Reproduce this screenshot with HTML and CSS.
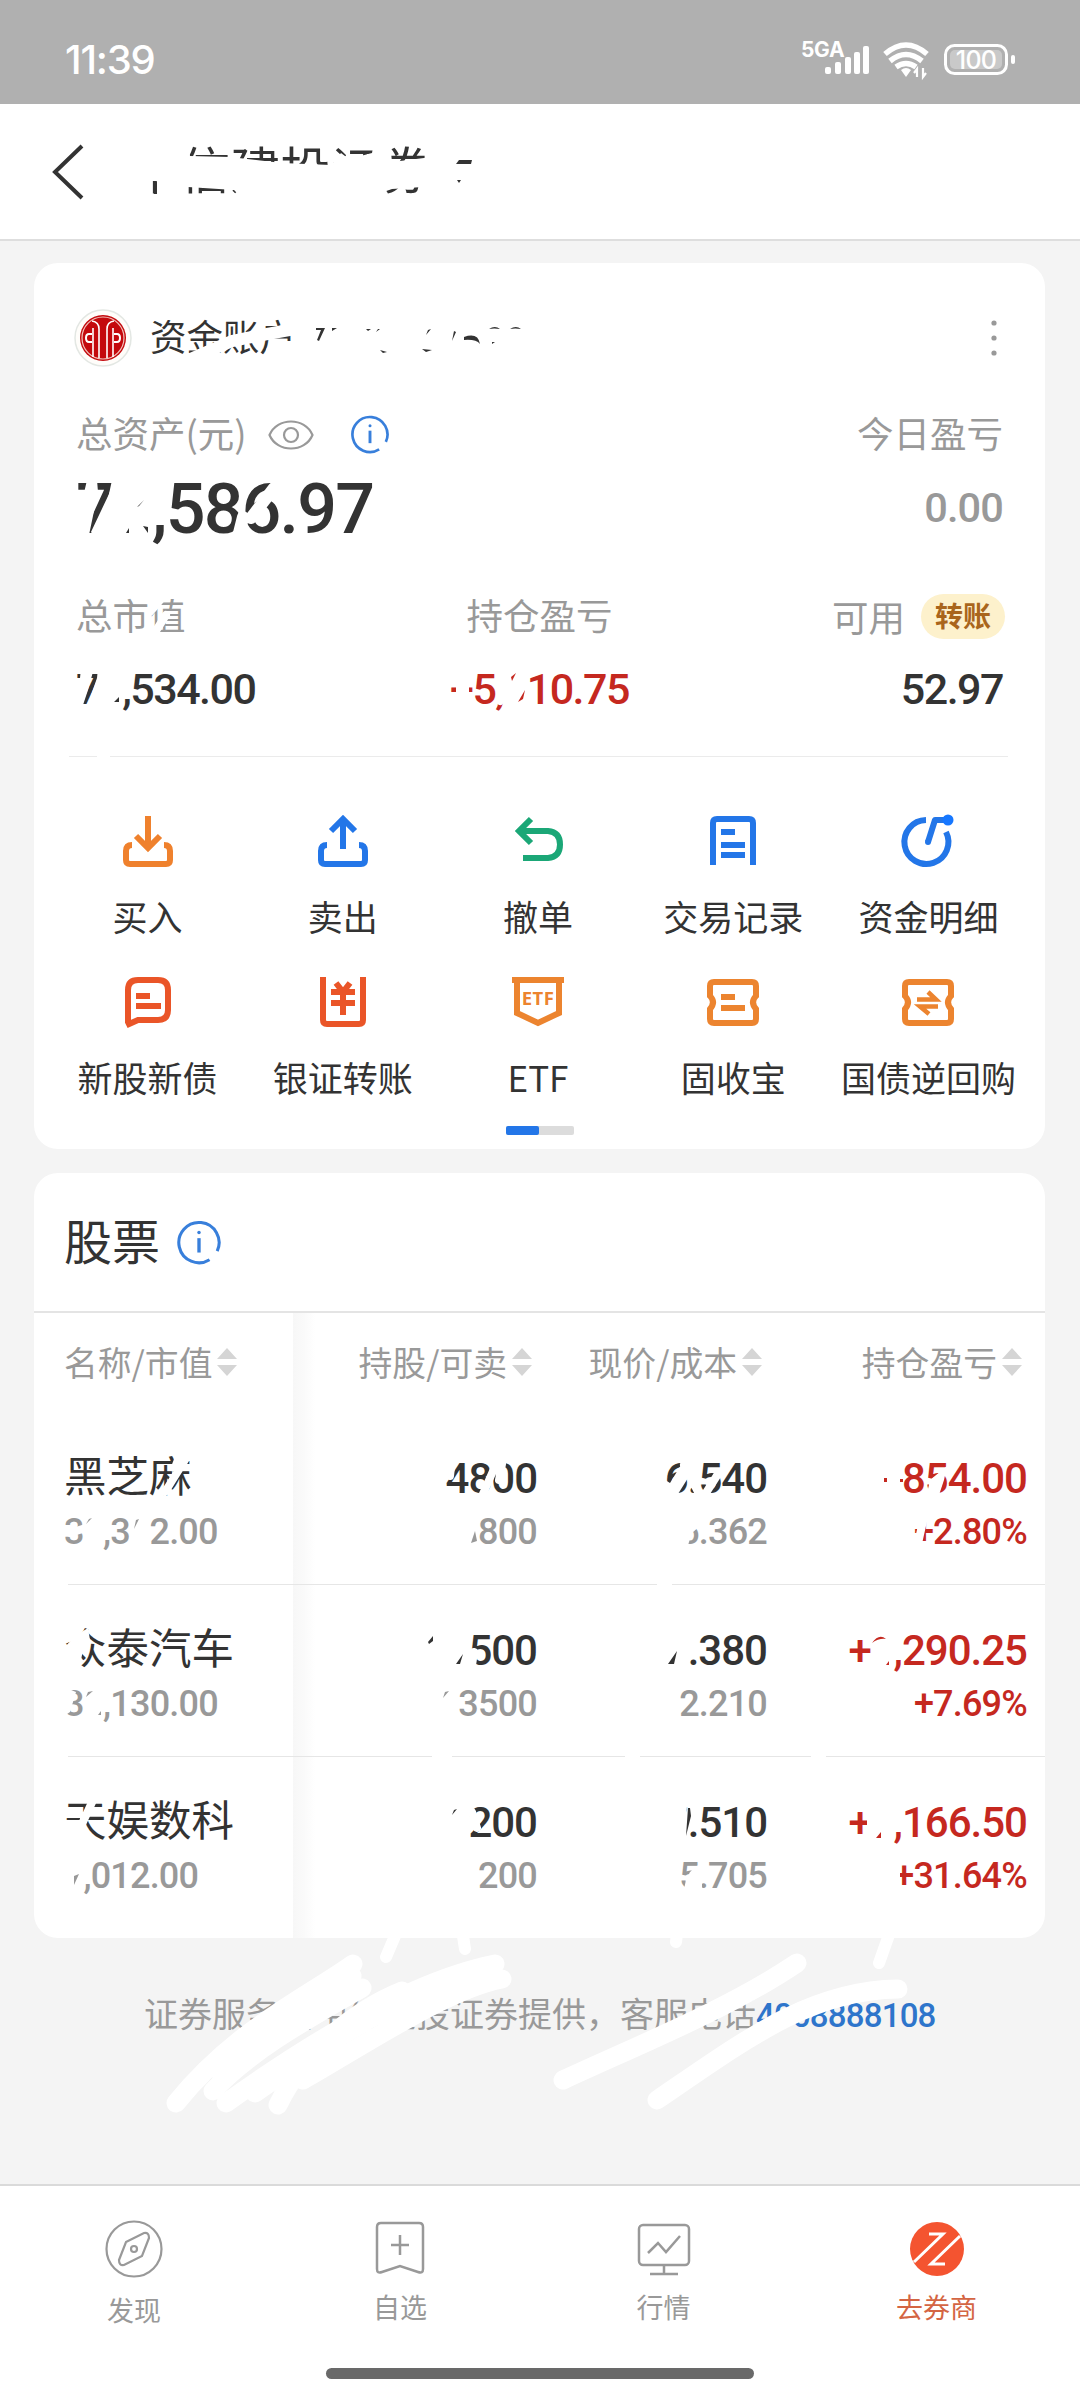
FILE: index.html
```html
<!DOCTYPE html>
<html lang="zh-CN">
<head>
<meta charset="utf-8">
<title>证券账户</title>
<link rel="stylesheet" href="styles.css">
</head>
<body>
<div class="screen">
  <header class="status">
    <span class="time">11:39</span>
    <svg class="status-icons" width="220" height="44" viewBox="798 38 220 44" fill="#fff">
      <text x="801" y="57" class="net">5GA</text>
      <rect x="825" y="67" width="6" height="7" rx="2"/><rect x="835" y="62" width="6" height="12" rx="2"/><rect x="845" y="57" width="6" height="17" rx="2"/><rect x="854" y="52" width="6" height="22" rx="2"/><rect x="863" y="46" width="6" height="28" rx="2"/>
      <g fill="none" stroke="#fff" stroke-width="5.500"><path d="M885 54Q906 36 927 54"/><path d="M890 61Q906 48 922 61"/><path d="M896 67Q906 60 916 67"/></g>
      <path d="M901 70Q906 66 911 70L906 77Z"/><path d="M917 77v-8l-3 4M923 68v9l3-4" stroke="#fff" stroke-width="2.200" fill="none"/>
      <rect x="945.500" y="45.500" width="61" height="28" rx="9" fill="none" stroke="#fff" stroke-width="3"/>
      <rect x="950" y="50" width="52" height="19" rx="5" fill="#c9c9c9"/><rect x="1011" y="55" width="4" height="9" rx="2"/>
      <text x="976" y="69" text-anchor="middle" class="battery">100</text>
    </svg>
  </header>
  <nav class="topbar">
    <svg width="34" height="58" viewBox="51 142 34 58"><path d="M82 145 55 171 82 197" fill="none" stroke="#333" stroke-width="4"/></svg>
    <h1>中信建投证券</h1>
  </nav>

  <main>
    <section class="card account">
      <div class="acct-head">
        <svg width="58" height="58" viewBox="-29 -29 58 58"><circle r="28" fill="#fffdfa" stroke="#e3e7e3" stroke-width="1.500"/><circle r="23" fill="#c4090d"/><circle r="21" fill="none" stroke="#f1c5bd" stroke-width="1.200"/><g fill="none" stroke="#fff" stroke-width="1.600"><path d="M-10-10v29M10-10v29M-11-17q7 1 7 8v29M11-17q-7 1-7 8v29"/><path d="M-11-4h-3q-3 0-3 4t3 4h3M11-4h3q3 0 3 4t-3 4h-3" stroke-width="2"/></g></svg>
        <span class="acct-name">资金账户</span>
        <svg class="more" width="10" height="40" viewBox="0 0 10 40" fill="#999"><circle cx="5" cy="5" r="2.600"/><circle cx="5" cy="20" r="2.600"/><circle cx="5" cy="35" r="2.600"/></svg>
      </div>
      <div class="line labels">
        <span>总资产(元)</span>
        <svg class="eye" width="46" height="32" viewBox="-23 -16 46 32" fill="none" stroke="#999" stroke-width="2.200"><path d="M-21.500 0C-14-18 14-18 21.500 0 14 18-14 18-21.500 0Z"/><circle r="7"/></svg>
        <svg class="info" width="40" height="40" viewBox="-24 -24 48 48"><use href="#info"/></svg>
        <span class="right">今日盈亏</span>
      </div>
      <div class="line totals"><span class="big num">7<i></i>,586.97</span><span class="right num today">0.00</span></div>
      <div class="three labels row-a"><span>总市值</span><span>持仓盈亏</span><span class="avail">可用<b>转账</b></span></div>
      <div class="three num row-b"><span>7<i></i>,534.00</span><span class="red">+5,<i></i>10.75</span><span>52.97</span></div>
      <hr>
      <div class="actions">
        <div><svg viewBox="-26 -26 52 52" fill="none" stroke="#ef812d" stroke-width="6"><path d="M0-25V6M-12-5 0 7 12-5M-16 4q-6 0-6 6v9q0 4 4 4h36q4 0 4-4v-9q0-6-6-6"/></svg><span>买入</span></div>
        <div><svg viewBox="-26 -26 52 52" fill="none" stroke="#2376e8" stroke-width="6"><path d="M0 8V-22M-12-10 0-22 12-10M-16 4q-6 0-6 6v9q0 4 4 4h36q4 0 4-4v-9q0-6-6-6"/></svg><span>卖出</span></div>
        <div><svg viewBox="-26 -26 52 52" fill="none" stroke="#1ba777" stroke-width="6"><path d="M-7-22-19-10-7 2M-19-10H10Q22-9 22 3.500T10 17H-15"/></svg><span>撤单</span></div>
        <div><svg viewBox="-26 -26 52 52" fill="none" stroke="#2376e8" stroke-width="6"><path d="M-20 24V-18q0-4 4-4h32q4 0 4 4V24M-12-9H2M-12 4h24M-12 14h24"/></svg><span>交易记录</span></div>
        <div><svg viewBox="-26 -26 52 52" fill="none" stroke="#2376e8" stroke-width="6"><path d="M-2-21A22 22 0 1 0 18-9M0 1 7-21H20" stroke-linejoin="round"/><circle cx="20" cy="-21" r="5.500" fill="#1677ff" stroke="none"/><circle cx="0" cy="1" r="3" fill="#2376e8" stroke="none"/></svg><span>资金明细</span></div>
        <div><svg viewBox="-26 -26 52 52" fill="none" stroke="#ea5528" stroke-width="6"><path d="M-20 20V-12q0-10 10-10H10q10 0 10 10V8q0 10-10 10H-10L-19 22ZM-12-6H2M-12 4h25"/></svg><span>新股新债</span></div>
        <div><svg viewBox="-26 -26 52 52" fill="none" stroke="#ea5528" stroke-width="6"><path d="M-20-25V18q0 4 4 4h32q4 0 4-4V-25M-7-19 0-10 7-19M-12-10h24M-12 1h24M0-10V13"/></svg><span>银证转账</span></div>
        <div><svg viewBox="-26 -26 52 52" fill="none" stroke="#ec842f" stroke-width="6"><path d="M-26-22h52M-21-22V11L0 21 21 11V-22"/><text x="0" y="3" text-anchor="middle" class="etf">ETF</text></svg><span>ETF</span></div>
        <div><svg viewBox="-26 -26 52 52" fill="none" stroke="#ec842f" stroke-width="6"><path id="ticket" d="M-19-20H19q4 0 4 4v10q-6 6 0 13v10q0 4-4 4h-38q-4 0-4-4V7q6-7 0-13v-10q0-4 4-4Z"/><path d="M-12-5H2M-12 6h24"/></svg><span>固收宝</span></div>
        <div><svg viewBox="-26 -26 52 52" fill="none" stroke="#ec842f" stroke-width="6"><use href="#ticket"/><path d="M-11-2.500H8L0-10M10 4.500H-8L1 12" stroke-width="4.500"/></svg><span>国债逆回购</span></div>
      </div>
      <div class="pager"><span></span></div>
    </section>

    <section class="card holdings">
      <div class="sec-title"><h2>股票</h2><svg class="info" width="46" height="46" viewBox="-24 -24 48 48"><g id="info" fill="none" stroke="#387fdb" stroke-width="3.200"><path d="M19 9.500A21 21 0 1 0 11 18.500"/><path d="M0-4V11" stroke-width="3.500"/><circle cy="-10" r="1.800" fill="#387fdb" stroke="none"/></g></svg></div>
      <div class="table">
        <div class="tr th">
          <span>名称/市值<svg viewBox="0 0 20 28"><path d="M0 11 10 0 20 11ZM0 17H20L10 28Z"/></svg></span>
          <span>持股/可卖<svg viewBox="0 0 20 28"><path d="M0 11 10 0 20 11ZM0 17H20L10 28Z"/></svg></span>
          <span>现价/成本<svg viewBox="0 0 20 28"><path d="M0 11 10 0 20 11ZM0 17H20L10 28Z"/></svg></span>
          <span>持仓盈亏<svg viewBox="0 0 20 28"><path d="M0 11 10 0 20 11ZM0 17H20L10 28Z"/></svg></span>
        </div>
        <div class="tr num">
          <div><strong class="name">黑芝麻</strong><small>3<i></i>,3<i></i>2.00</small></div>
          <div><strong>4800</strong><small>800</small></div>
          <div><strong>6.540</strong><small>5.362</small></div>
          <div class="red"><strong>854.00</strong><small>+2.80%</small></div>
        </div>
        <div class="tr num">
          <div><strong class="name">众泰汽车</strong><small>3<i></i>,130.00</small></div>
          <div><strong>500</strong><small>3500</small></div>
          <div><strong>.380</strong><small>2.210</small></div>
          <div class="red"><strong>+<i></i>,290.25</strong><small>+7.69%</small></div>
        </div>
        <div class="tr num">
          <div><strong class="name">天娱数科</strong><small><i></i>,012.00</small></div>
          <div><strong>200</strong><small>200</small></div>
          <div><strong>7.510</strong><small>5.705</small></div>
          <div class="red"><strong>+<i></i>,166.50</strong><small>+31.64%</small></div>
        </div>
      </div>
    </section>
    <p class="service">证券服务由中信建投证券提供，客服电话<a>4008888108</a></p>
  </main>

  <footer class="tabs">
    <div class="first"><svg viewBox="-30 -30 60 60" fill="none" stroke="#999" stroke-width="2.200"><circle r="27.500"/><path d="M-8-7 10-16q5-1 5 5L8 7-10 16q-5 1-5-5Z"/><circle r="3"/></svg><span>发现</span></div>
    <div><svg viewBox="-30 -30 60 60" fill="none" stroke="#999" stroke-width="2.500"><path d="M-19-26H19q4 0 4 4V20q0 5-5 3L0 17-18 23q-5 2-5-3V-22q0-4 4-4ZM-9-4H9M0-14V6"/></svg><span>自选</span></div>
    <div><svg viewBox="-30 -30 60 60" fill="none" stroke="#999" stroke-width="2.500"><rect x="-25" y="-24" width="50" height="40" rx="4"/><path d="M0 16v9M-14 25h28M-16 4-6-6 2 3 16-13"/></svg><span>行情</span></div>
    <div class="on"><svg viewBox="-30 -30 60 60"><circle r="27" fill="#f45430"/><g fill="none" stroke="#fff" stroke-width="3"><path d="M-8-15H6L-23 13M23-13-6 15H8"/></g></svg><span>去券商</span></div>
  </footer>
  <div class="home"></div>

  <svg class="scribble" width="1080" height="2400" viewBox="0 0 1080 2400">
    <path class="patch" d="M130 140H188L190 156 230 157 282 163 331 165 341 153 349 159 372 153 374 142H390L392 162 432 157 436 140H500V200H426L423 187 392 189 372 196H240L234 190 188 187 184 200H160V181H152V200H130Z"/>
    <path class="patch" d="M87 480H97L98 492 89 535 72 545V493H84ZM112 480 109 494 91 532 100 545 122 540V480ZM81 668H94L88 690 82 708H73V682L80 678ZM98 668 97 678 87 707H104V668ZM670 1483 681 1465 691 1464 688 1478 678 1494 662 1498V1478ZM676 1508H702V1524L692 1533 687 1548H676ZM658 1806H687L684 1850H655ZM690 1872 702 1862V1898H682L686 1880ZM930 1480 947 1466 944 1480 938 1498H926ZM64 1648 75 1636 88 1628 90 1640 83 1650 79 1670H64ZM66 1812H88L80 1845H62V1826H80V1818H66ZM64 1716 70 1712 76 1692 66 1688H60V1716Z"/>
    <g class="w12"><path d="M186 361 232 341 262 335 300 328"/><path d="M272 351H302"/><path d="M106 523 116 492M238 537 243 517M251 518 274 488"/></g>
    <g class="w8">
      <path d="M150 612 162 598M152 637 166 615M460 672V705M465 672V705M500 701 509 685"/>
      <path d="M190 1452 165 1492M176 1465 182 1450M70 1533 98 1524M452 1458 450 1476M482 1496 497 1462M499 1480 502 1464"/>
      <path d="M684 1465 688 1474M704 1496 718 1474M692 1480 700 1496M917 1548 925 1512"/>
      <path d="M471 1672 474 1652M472 1812 477 1828"/>
      <path d="M94 1798 82 1824M871 1815V1846M896 1862V1894"/>
    </g>
    <g class="bits">
      <path d="M154 182h3v12h-3zM456 164l3-4h13l-1 4zM457 180h4l-2 3zM316 328h9l-6 13-2-1 4-10h-5zM332 328h5l-5 3zM366 329h5l-3 2zM376 332l4-3h-2zM380 350l7 2-4 1zM426 335l5-6-3 1zM422 349l10 1-6 2zM443 338l5-8zM454 331l2 1-4 9zM464 337q14-5 16 7-4-5-16-4zM475 351h4zM489 329q6-4 11 0-6-1-11 0zM510 329q6-4 11 0-6-1-11 0zM492 342h3l-3 2z"/>
      <path d="M137 507l7-7-5 6zM126 533l3-5v5zM143 526l5 7v-6zM114 702l5-5v5zM428 1642l5-6v5l-4 3zM456 1664l7-10-3 10zM452 1815l5-6-3 1zM668 1664l9-13-3 13zM686 1836l5-20-1-8h-2z"/>
    </g>
    <path class="graybits" d="M86 1524l6-6-3 1zM134 1529l5-10-3 1zM471 1543l4-12 2 10zM443 1698l6-7-4 1zM86 1697l7-6-5 1zM98 1715l3-4v4zM74 1885v-9l5-2z"/>
    <path class="redbits" d="M884 1478h3v4h-3zM900 1479h3v3h-3zM872 1643q7-10 14-4-7-1-14 4zM886 1665l3-4v4zM876 1838l5-6v6zM511 677l5-4-4 8zM518 702l7-12-2 9z"/>
    <path class="gaps" d="M97 757H110M657 1584.500H672M432 1756.500H452M625 1756.500H640M811 1756.500H826"/>
    <g class="w17"><path d="M353 1964C305 1998 235 2030 176 2103"/><path d="M362 1988C315 2015 250 2050 213 2091"/><path d="M495 1964C405 1982 300 2050 226 2103"/><path d="M502 1979C445 1990 360 2048 303 2080"/><path d="M402 1991C355 2010 305 2050 278 2105"/><path d="M475 1974C410 1990 330 2040 255 2093"/><path d="M352 1976C300 2006 260 2030 220 2072"/><path d="M797 1963C730 2008 650 2040 563 2080"/><path d="M898 1989C810 1990 745 2040 657 2100"/></g>
    <g class="w12"><path d="M395 1936 386 1957M463 1936 465 1949M677 1934 676 1942M890 1932 879 1963"/></g>
  </svg>
</div>
</body>
</html>
```
FILE: styles.css
```css
* { box-sizing: border-box; }
body { margin: 0; background: #f4f4f4; color: #333; font-family: "Noto Sans CJK SC", sans-serif; }
h1, h2, p { margin: 0; font-weight: 400; }
svg { display: block; flex: none; }
.screen { position: relative; width: 1080px; height: 2400px; overflow: hidden; display: flex; flex-direction: column; }

.status { height: 104px; background: #b0b0b0; color: #fff; display: flex; justify-content: space-between; padding: 38px 62px 0 65px; }
.time { font: 500 40px/44px Inter, sans-serif; letter-spacing: -1.2px; }
.net { font: 700 21px Inter, sans-serif; letter-spacing: -.3px; }
.battery { font: 500 25px Inter, sans-serif; letter-spacing: -.8px; }

.topbar { height: 137px; background: #fff; border-bottom: 2px solid #dedede; display: flex; align-items: center; padding: 0 51px 0; }
.topbar h1 { font-size: 50px; line-height: 60px; margin: -9px 0 0 45px; letter-spacing: .2px; }

main { height: 1943px; padding: 22px 35px 0 34px; }
.card { background: #fff; border-radius: 24px; }
.num { font-family: Roboto, sans-serif; font-weight: 500; }
.num i { display: inline-block; width: .54em; }
.red { color: #c5281f; }
.right { margin-left: auto; }

.account { height: 886px; padding: 40px 42px 0; display: flex; flex-direction: column; }
.acct-head { height: 68px; display: flex; align-items: center; margin-left: -2px; padding-top: 2px; }
.acct-name { font-size: 36.5px; line-height: 48px; margin: -5px 0 0 18px; }
.more { margin: 0 4px 0 auto; }
.labels { color: #999; font-size: 36.5px; line-height: 44px; }
.line { display: flex; align-items: center; }
.line.labels { height: 44px; margin-top: 40px; }
.eye { margin: 3px 0 0 21px; }
.line .info { margin: 1px 0 0 36px; }
.totals { height: 60px; margin-top: 24px; }
.big { font-size: 70px; letter-spacing: -1.8px; }
.today { font-size: 41.5px; letter-spacing: -.9px; color: #999; margin-top: -3px; }
.three { display: grid; grid-template-columns: 1fr auto 1fr; align-items: center; }
.three > :last-child { justify-self: end; }
.row-a { height: 45px; margin-top: 55px; }
.row-a > span { margin-top: -3px; }
.row-a > .avail { margin-top: 0; }
.avail { display: flex; align-items: center; line-height: 42px; }
.avail b { background: #fdf1cc; color: #a9651c; font-size: 28px; line-height: 42px; height: 45px; border-radius: 23px; padding: 0 14px; margin: 0 -2px 0 16px; font-weight: 700; }
.row-b { height: 44px; margin-top: 25px; font-size: 43px; letter-spacing: -1.5px; }
hr { width: 939px; height: 1px; border: 0; background: #ebebeb; margin: 48px 0 0 -7px; flex: none; }
.actions { display: grid; grid-template-columns: repeat(5, 1fr); row-gap: 41px; margin: 58px -23px 0 -26px; }
.actions div { display: flex; flex-direction: column; align-items: center; }
.actions div > svg { width: 52px; height: 52px; overflow: visible; }
.actions span { font-size: 35px; line-height: 38px; margin-top: 30px; white-space: nowrap; }
.etf { font: 700 18.500px "Noto Sans", sans-serif; fill: #ec842f; stroke: none; letter-spacing: .4px; }
.pager { width: 68px; height: 9px; border-radius: 2px; background: #dcdcdc; margin: 30px auto 0; }
.pager span { display: block; width: 33px; height: 9px; border-radius: 2px; background: #2376e8; }

.holdings { height: 765px; margin-top: 24px; }
.sec-title { height: 140px; border-bottom: 2px solid #e4e4e4; display: flex; align-items: center; padding-left: 30px; }
.sec-title h2 { font-size: 48px; line-height: 60px; margin: -6px 16px 0 0; }
.table { height: 625px; background: linear-gradient(90deg, #f7f7f7, #fafafa 50%, #fff) 259px 0 / 22px 100% no-repeat; }
.tr { display: grid; grid-template-columns: 229px 244px 230px 260px; height: 172px; position: relative; padding-left: 30px; }
.tr > :not(:first-child) { justify-self: end; text-align: right; }
.tr + .tr:not(:last-child) { background: linear-gradient(#e6e6e6, #e6e6e6) 34px 100% / 977px 1px no-repeat; }
.tr > div { padding-top: 41px; }
.th { height: 100px; color: #999; font-size: 33.8px; line-height: 93px; }
.th span { display: flex; align-items: center; height: 96px; padding-right: 5px; }
.th svg { width: 20px; height: 28px; fill: #d5d5d5; margin: 2px 0 0 5px; }
.tr strong, .tr small { display: block; }
.tr strong { font-size: 42px; line-height: 50px; font-weight: 500; letter-spacing: -1px; }
.tr strong.name { font-family: "Noto Sans CJK SC", sans-serif; font-weight: 400; font-size: 42.5px; letter-spacing: 0; position: relative; top: -5px; }
.tr small { font-size: 36px; line-height: 40px; margin-top: 8px; letter-spacing: -.8px; }
.tr > div:not(.red) small { color: #999; }

.service { color: #999; font-size: 34px; line-height: 40px; margin-top: 55px; padding-left: 110px; white-space: nowrap; }
.service a { color: #2e75cb; font: 500 33px/40px Roboto, sans-serif; letter-spacing: -.8px; }

.tabs { height: 182px; background: #fff; border-top: 2px solid #dadada; display: grid; grid-template-columns: 268px 264px 263px 283px; padding-top: 33px; color: #999; }
.tabs div { display: flex; flex-direction: column; align-items: center; }
.tabs svg { width: 60px; height: 60px; }
.tabs span { font-size: 27px; line-height: 32px; margin-top: 12px; }
.tabs .first span { margin-top: 15px; }
.tabs .on { color: #d46543; }
.home { flex: 1; background: #fff; display: flex; }
.home::before { content: ""; width: 428px; height: 11px; border-radius: 6px; background: #696969; margin: 2px auto 0; }

.scribble { position: absolute; inset: 0; fill: none; stroke: #fff; stroke-linecap: round; pointer-events: none; }
.patch { fill: #fff; stroke: none; }
.w8 { stroke-width: 8; }
.w12 { stroke-width: 12; }
.w17 { stroke-width: 19; }
.bits { fill: #333; stroke: none; }
.graybits { fill: #999; stroke: none; }
.redbits { fill: #c5281f; stroke: none; }
.gaps { stroke-width: 4; stroke-linecap: butt; }
```
